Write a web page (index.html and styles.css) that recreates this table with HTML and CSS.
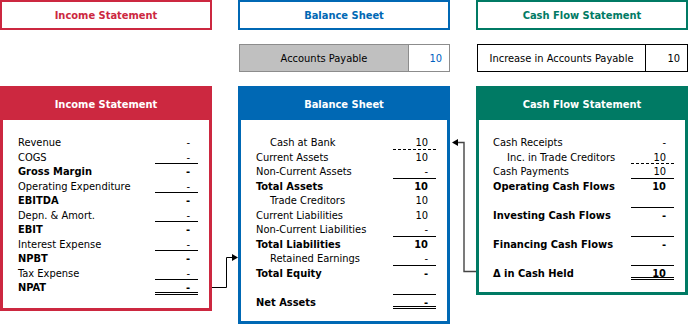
FILE: index.html
```html
<!DOCTYPE html>
<html>
<head>
<meta charset="utf-8">
<link rel="stylesheet" href="styles.css">
</head>
<body>
<div class="page">
  <div class="title t-red">Income Statement</div>
  <div class="title t-blue">Balance Sheet</div>
  <div class="title t-green">Cash Flow Statement</div>

  <div class="input-empty"></div>
  <div class="input input-gray">
    <div class="in-label">Accounts Payable</div>
    <div class="in-val blue">10</div>
  </div>
  <div class="input input-black">
    <div class="in-label">Increase in Accounts Payable</div>
    <div class="in-val">10</div>
  </div>

  <div class="panel p-red">
    <div class="ph">Income Statement</div>
    <div class="pb">
      <div class="row"><span class="lbl">Revenue</span><span class="val">-</span></div>
      <div class="row"><span class="lbl">COGS</span><span class="val u1">-</span></div>
      <div class="row b"><span class="lbl">Gross Margin</span><span class="val">-</span></div>
      <div class="row"><span class="lbl">Operating Expenditure</span><span class="val u1">-</span></div>
      <div class="row b"><span class="lbl">EBITDA</span><span class="val">-</span></div>
      <div class="row"><span class="lbl">Depn. &amp; Amort.</span><span class="val u1">-</span></div>
      <div class="row b"><span class="lbl">EBIT</span><span class="val">-</span></div>
      <div class="row"><span class="lbl">Interest Expense</span><span class="val u1">-</span></div>
      <div class="row b"><span class="lbl">NPBT</span><span class="val">-</span></div>
      <div class="row"><span class="lbl">Tax Expense</span><span class="val u1">-</span></div>
      <div class="row b"><span class="lbl">NPAT</span><span class="val u2">-</span></div>
    </div>
  </div>

  <div class="panel p-blue">
    <div class="ph">Balance Sheet</div>
    <div class="pb pb-bs">
      <div class="row"><span class="lbl ind">Cash at Bank</span><span class="val ud">10</span></div>
      <div class="row"><span class="lbl">Current Assets</span><span class="val">10</span></div>
      <div class="row"><span class="lbl">Non-Current Assets</span><span class="val u1">-</span></div>
      <div class="row b"><span class="lbl">Total Assets</span><span class="val">10</span></div>
      <div class="row"><span class="lbl ind">Trade Creditors</span><span class="val">10</span></div>
      <div class="row"><span class="lbl">Current Liabilities</span><span class="val">10</span></div>
      <div class="row"><span class="lbl">Non-Current Liabilities</span><span class="val u1">-</span></div>
      <div class="row b"><span class="lbl">Total Liabilities</span><span class="val">10</span></div>
      <div class="row"><span class="lbl ind">Retained Earnings</span><span class="val u1">-</span></div>
      <div class="row b"><span class="lbl">Total Equity</span><span class="val">-</span></div>
      <div class="row"><span class="lbl"></span><span class="val u1"></span></div>
      <div class="row b"><span class="lbl">Net Assets</span><span class="val u2">-</span></div>
    </div>
  </div>

  <div class="panel p-green">
    <div class="ph">Cash Flow Statement</div>
    <div class="pb pb-cf">
      <div class="row"><span class="lbl">Cash Receipts</span><span class="val">-</span></div>
      <div class="row"><span class="lbl ind">Inc. in Trade Creditors</span><span class="val ud">10</span></div>
      <div class="row"><span class="lbl">Cash Payments</span><span class="val u1">10</span></div>
      <div class="row b"><span class="lbl">Operating Cash Flows</span><span class="val">10</span></div>
      <div class="row"><span class="lbl"></span><span class="val u1"></span></div>
      <div class="row b"><span class="lbl">Investing Cash Flows</span><span class="val">-</span></div>
      <div class="row"><span class="lbl"></span><span class="val u1"></span></div>
      <div class="row b"><span class="lbl">Financing Cash Flows</span><span class="val">-</span></div>
      <div class="row"><span class="lbl"></span><span class="val u1"></span></div>
      <div class="row b"><span class="lbl">&Delta; in Cash Held</span><span class="val u2">10</span></div>
    </div>
  </div>

  <svg class="links" width="688" height="325" viewBox="0 0 688 325">
    <polyline points="212,287.5 226.5,287.5 226.5,257.5 233,257.5" fill="none" stroke="#000" stroke-width="1"/>
    <polygon points="232,254 238,257.5 232,261" fill="#000"/>
    <polyline points="476,271.5 464,271.5 464,142.5 457,142.5" fill="none" stroke="#444" stroke-width="1.4"/>
    <polygon points="458,139 452,142.5 458,146" fill="#000"/>
  </svg>
</div>
</body>
</html>
```
FILE: styles.css
```css
html, body {
  margin: 0;
  padding: 0;
  background: #fff;
}
body {
  font-family: "DejaVu Sans Condensed", "DejaVu Sans", sans-serif;
  font-size: 11px;
  color: #000;
}
.page {
  position: relative;
  width: 688px;
  height: 325px;
  display: grid;
  grid-template-columns: 212px 212px 212px;
  grid-template-rows: 30px 28px auto;
  column-gap: 26px;
  row-gap: 14px;
  align-items: start;
}
.title {
  box-sizing: border-box;
  height: 30px;
  border: 2px solid;
  display: flex;
  align-items: center;
  justify-content: center;
  font-weight: bold;
  font-size: 11px;
}
.t-red { border-color: #cc2840; color: #cc2840; }
.t-blue { border-color: #0068b4; color: #0068b4; }
.t-green { border-color: #007a64; color: #007a64; }

.input {
  box-sizing: border-box;
  height: 28px;
  display: flex;
  border: 1px solid;
}
.input-gray { border-color: #8c8c8c; margin-left: 1px; }
.input-gray .in-label { background: #c0c0c0; border-right: 1px solid #8c8c8c; width: 168px; }
.input-black { border-color: #000; margin-left: 1px; }
.input-black .in-label { border-right: 1px solid #000; width: 167px; }
.in-label {
  display: flex;
  align-items: center;
  justify-content: center;
}
.in-val {
  flex: 1;
  display: flex;
  align-items: center;
  justify-content: flex-end;
  padding-right: 7px;
}
.blue { color: #0060c0; }

.panel {
  box-sizing: border-box;
  border: 3px solid;
}
.p-red { border-color: #cc2840; }
.p-blue { border-color: #0068b4; }
.p-green { border-color: #007a64; }
.ph {
  height: 31px;
  display: flex;
  align-items: center;
  justify-content: center;
  color: #fff;
  font-weight: bold;
}
.p-red .ph { background: #cc2840; }
.p-blue .ph { background: #0068b4; }
.p-green .ph { background: #007a64; }

.pb {
  padding: 15px 11px 13px 15px;
}
.pb-bs { padding-bottom: 12px; }
.pb-cf { padding: 15px 11px 12px 14px; }
.row {
  display: flex;
  height: 14.5px;
  line-height: 15.5px;
}
.row.b { font-weight: bold; }
.lbl {
  flex: 1;
  white-space: nowrap;
}
.lbl.ind { padding-left: 14px; }
.val {
  box-sizing: border-box;
  width: 43px;
  text-align: right;
  padding-right: 8px;
}
.u1 { border-bottom: 1px solid #000; }
.u2 { border-bottom: 3px double #000; }
.ud { border-bottom: 1px dashed #000; }

.links {
  position: absolute;
  left: 0;
  top: 0;
  pointer-events: none;
}
```
